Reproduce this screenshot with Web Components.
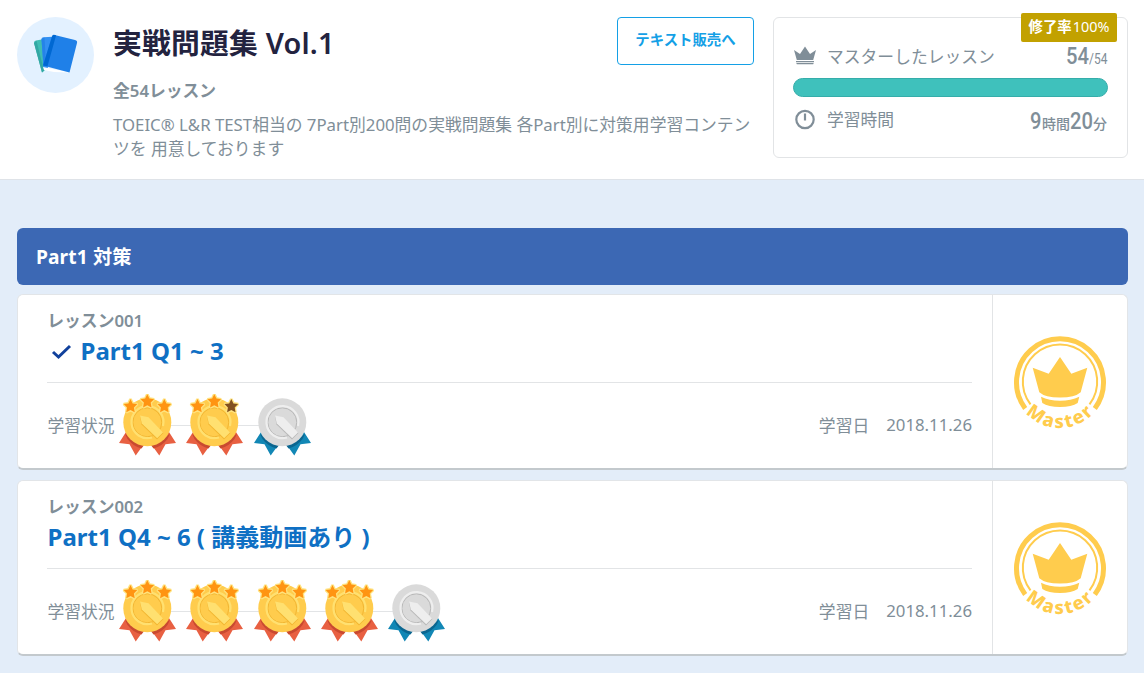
<!DOCTYPE html>
<html lang="ja">
<head>
<meta charset="utf-8">
<title>実戦問題集 Vol.1</title>
<style>
  body {
    margin: 0;
    height: 673px;
    overflow: hidden;
    background: #e3edf9;
    color: #808e98;
    font-family: "Noto Sans", "Noto Sans CJK JP", sans-serif;
    font-size: 16.8px;
    line-height: 24px;
  }
</style>
</head>
<body>
<course-header heading="実戦問題集 Vol.1" count="全54レッスン">
  TOEIC® L&amp;R TEST相当の 7Part別200問の実戦問題集 各Part別に対策用学習コンテンツを 用意しております
  <link-button slot="action">テキスト販売へ</link-button>
  <course-stats slot="stats"></course-stats>
</course-header>
<lesson-section heading="Part1 対策">
  <lesson-card number="レッスン001" medals="3,2,0" date="2018.11.26" checked>Part1 Q1 ~ 3</lesson-card>
  <lesson-card number="レッスン002" medals="3,3,3,3,0" date="2018.11.26">Part1 Q4 ~ 6 ( 講義動画あり )</lesson-card>
</lesson-section>

<script>
class CourseHeader extends HTMLElement {
  constructor() {
    super();
    this.attachShadow({mode: 'open'});
    this.shadowRoot.innerHTML = `
      <style>
        :host {
          display: flex;
          box-sizing: border-box;
          height: 180px;
          padding: 17px 16px 0 17px;
          background: #fff;
          border-bottom: 1px solid #dfe3e8;
        }
        .icon {
          flex: none;
          width: 77px;
          height: 76px;
          margin-right: 19px;
        }
        .info {
          width: 641px;
          margin-right: 19px;
        }
        .top {
          display: flex;
          justify-content: space-between;
          height: 62px;
        }
        h1 {
          margin: 8px 0 0;
          color: #23233f;
          font-size: 28.8px;
          font-weight: 600;
          letter-spacing: .2px;
          line-height: 36px;
        }
        .count {
          font-weight: 600;
        }
        p {
          margin: 10px 0 0;
        }
      </style>
      <svg class="icon" viewBox="0 0 77 76">
        <ellipse cx="38.5" cy="38" rx="38.5" ry="38" fill="#e3f1ff"/>
        <path d="M17 26q0-2 2-2.400l7-1.400 3 30-4 3.300z" fill="#3fbdb3"/>
        <path d="M17 26l2.500-2.300 7.500 30-2 1.800z" fill="#33a7a4"/>
        <path d="M24.500 22q0-1.700 2-1.800l9-.5-5 33-4-1z" fill="#3290f2"/>
        <path d="M24.500 22l3-1.500 1.500 27-2.500 1z" fill="#2583e8"/>
        <path d="M26 50l27 5.500-16-.5-10-2z" fill="#fff"/>
        <path d="M35 19.500q.6-2 2.600-1.600l20.400 5q2.600.6 2 3l-7.500 29.600-26.500-7z" fill="#1f80e8"/>
        <path d="M35 19.500q.6-2 2.600-1.600l1.500.4-8.600 31-4.500-.8z" fill="#0068d2"/>
      </svg>
      <div class="info">
        <div class="top"><h1></h1><slot name="action"></slot></div>
        <div class="count"></div>
        <p><slot></slot></p>
      </div>
      <slot name="stats"></slot>
    `;
  }
  connectedCallback() {
    this.shadowRoot.querySelector('h1').textContent = this.getAttribute('heading');
    this.shadowRoot.querySelector('.count').textContent = this.getAttribute('count');
  }
}

class LinkButton extends HTMLElement {
  constructor() {
    super();
    this.attachShadow({mode: 'open'});
    this.shadowRoot.innerHTML = `
      <style>
        :host {
          display: block;
          box-sizing: border-box;
          width: 137px;
          height: 48px;
          border: 1px solid #14a0e6;
          border-radius: 4px;
          color: #14a0e6;
          font-size: 14.4px;
          font-weight: 700;
          line-height: 44px;
          text-align: center;
        }
      </style>
      <slot></slot>
    `;
  }
}

class CourseStats extends HTMLElement {
  constructor() {
    super();
    this.attachShadow({mode: 'open'});
    this.shadowRoot.innerHTML = `
      <style>
        :host {
          display: block;
          position: relative;
          flex: none;
          box-sizing: border-box;
          width: 355px;
          height: 141px;
          padding: 27px 19px 0;
          border: 1px solid #e2e4e6;
          border-radius: 6px;
        }
        .badge {
          position: absolute;
          top: -5px;
          right: 10px;
          width: 96px;
          height: 29px;
          background: #c2a100;
          border-radius: 2px;
          color: #fff;
          font-size: 14.4px;
          line-height: 28px;
          text-align: center;
          white-space: nowrap;
        }
        .badge b {
          margin-right: 1px;
        }
        .row {
          display: flex;
          align-items: center;
          height: 24px;
        }
        .mark {
          width: 24px;
          height: 24px;
          margin-right: 10px;
        }
        .value {
          display: flex;
          align-items: baseline;
          margin-left: auto;
          padding: 2px 1px 0 0;
          font-family: Roboto, "Noto Sans CJK JP", sans-serif;
          font-size: 14px;
          font-weight: 500;
          line-height: 24px;
          white-space: nowrap;
        }
        /* narrow figures: each box is as wide as its scaled text */
        .num {
          font-size: 24px;
          transform: scaleX(.84);
          transform-origin: 0 0;
        }
        .two {
          width: 23px;
        }
        .one {
          width: 12px;
        }
        .of {
          width: 18px;
          font-size: 14.4px;
          font-weight: 400;
          transform: scaleX(.83);
          transform-origin: 0 0;
        }
        .time {
          padding-top: 4px;
        }
        .bar {
          box-sizing: border-box;
          height: 19px;
          margin: 9px 0 11px;
          background: #3fc1bc;
          border: 1px solid #35adaa;
          border-radius: 10px;
        }
      </style>
      <div class="badge"><b>修了率</b>100%</div>
      <div class="row">
        <svg class="mark" viewBox="0 0 24 24" fill="#808e98">
          <path d="M1 5l6 4 5-7.500 5 7.500 6-4-2.800 10H3.800zM3 16h18v1.300H3zM3.300 18h17.400l-.5 1.300H3.800z"/>
        </svg>
        <span>マスターしたレッスン</span>
        <div class="value"><span class="num two">54</span><span class="of">/54</span></div>
      </div>
      <div class="bar"></div>
      <div class="row">
        <svg class="mark" viewBox="0 0 24 24">
          <circle cx="12" cy="11.500" r="8.700" fill="none" stroke="#808e98" stroke-width="2.200"/>
          <path d="M12 5.500v7" stroke="#808e98" stroke-width="2.200"/>
        </svg>
        <span>学習時間</span>
        <div class="value time"><span class="num one">9</span><span>時間</span><span class="num two">20</span><span>分</span></div>
      </div>
    `;
  }
}

class LessonSection extends HTMLElement {
  constructor() {
    super();
    this.attachShadow({mode: 'open'});
    this.shadowRoot.innerHTML = `
      <style>
        :host {
          display: block;
          padding: 48px 16px 0 17px;
        }
        h2 {
          margin: 0 0 9px;
          padding: 0 19px;
          background: #3c68b4;
          border-radius: 6px;
          color: #fff;
          font-size: 19.2px;
          font-weight: 700;
          letter-spacing: .1px;
          line-height: 57px;
        }
        .list {
          display: grid;
          gap: 10px;
        }
      </style>
      <h2></h2>
      <div class="list"><slot></slot></div>
    `;
  }
  connectedCallback() {
    this.shadowRoot.querySelector('h2').textContent = this.getAttribute('heading');
  }
}

class LessonCard extends HTMLElement {
  constructor() {
    super();
    this.attachShadow({mode: 'open'});
    this.shadowRoot.innerHTML = `
      <style>
        :host {
          display: flex;
          box-sizing: border-box;
          height: 176px;
          background: #fff;
          border: 1px solid #e2e5e8;
          border-bottom: 2px solid #c3c9cd;
          border-radius: 6px;
        }
        .body {
          flex: 1;
          padding: 14px 20px 0 29px;
        }
        .number {
          padding-left: .3px;
          font-weight: 600;
        }
        .name {
          display: flex;
          align-items: center;
          height: 34px;
          padding: 1px 0 14px .6px;
          border-bottom: 1px solid #e2e4e6;
          color: #0f70c4;
          font-size: 24px;
          font-weight: 700;
          line-height: 34px;
        }
        .check {
          display: none;
          width: 27px;
          height: 24px;
          margin-right: 6px;
        }
        :host([checked]) .check {
          display: block;
        }
        .status {
          display: flex;
          align-items: center;
          height: 84px;
          padding-left: .5px;
        }
        .label {
          padding-top: 1px;
        }
        .medals {
          display: flex;
          gap: 10.3px;
          margin: 0 auto 0 4.500px;
          background: linear-gradient(#e2e4e6, #e2e4e6) 20px 31px / calc(100% - 40px) 1px no-repeat;
        }
        .date {
          margin-left: 17px;
        }
        .side {
          display: flex;
          align-items: center;
          justify-content: center;
          width: 134px;
          border-left: 1px solid #e2e4e6;
        }
      </style>
      <div class="body">
        <div class="number"></div>
        <div class="name">
          <svg class="check" viewBox="0 0 27 24"><path d="M5 13l5.500 5 11.500-11" fill="none" stroke="#11419c" stroke-width="3"/></svg>
          <slot></slot>
        </div>
        <div class="status">
          <span class="label">学習状況</span>
          <div class="medals"></div>
          <span class="label">学習日</span>
          <span class="date"></span>
        </div>
      </div>
      <div class="side"><master-seal></master-seal></div>
    `;
  }
  connectedCallback() {
    const root = this.shadowRoot;
    root.querySelector('.number').textContent = this.getAttribute('number');
    root.querySelector('.date').textContent = this.getAttribute('date');
    root.querySelector('.medals').innerHTML = this.getAttribute('medals').split(',')
      .map(stars => `<lesson-medal stars="${stars}"></lesson-medal>`).join('');
  }
}

// stars="0" is a medal that has not been won yet (silver)
class LessonMedal extends HTMLElement {
  constructor() {
    super();
    this.attachShadow({mode: 'open'});
  }
  connectedCallback() {
    const stars = Number(this.getAttribute('stars'));
    const c = stars > 0
      ? {ribbon: '#e86042', fold: '#c94a30', disc: '#ffcc4d', light: '#ffe070', shade: '#f2b632', pen: '#ffe070'}
      : {ribbon: '#1287b5', fold: '#0b6690', disc: '#dadada', light: '#eeeeee', shade: '#b8b8b8', pen: '#eeeeee'};
    const shape = 'M0-6.800L2.100-2.400l4.700.600-3.400 3.400.800 4.900L0 4.200l-4.200 2.300.800-4.900-3.400-3.400 4.700-.600z';
    const places = [[11.5, 11.8], [28.3, 7], [45.3, 11.8]];
    let halo = '';
    let front = '';
    if (stars > 0) {
      places.forEach(([x, y], i) => {
        const at = `transform="translate(${x} ${y})"`;
        halo += `<path d="${shape}" ${at} fill="#ffe27d" stroke="#ffe27d" stroke-width="2.600" stroke-miterlimit="2"/>`;
        front += `<path d="${shape}" ${at} fill="${i < stars ? '#ff9412' : '#82501f'}"/>`;
      });
    }
    this.shadowRoot.innerHTML = `
      <style>
        :host {
          display: block;
          width: 57px;
          height: 62px;
        }
        svg {
          display: block;
        }
      </style>
      <svg width="57" height="62" viewBox="0 0 57 62">
        <path d="M7 38L0 49l10.500 1.200L16.700 61.500 25 50z" fill="${c.ribbon}"/>
        <path d="M50 38l7 11-10.500 1.200L40.300 61.500 32 50z" fill="${c.ribbon}"/>
        <path d="M6 40l2.500 5q5 7 14 9.500l3-4zM51 40l-2.500 5q-5 7-14 9.500l-3-4z" fill="${c.fold}"/>
        <circle cx="28.300" cy="28.300" r="24" fill="${c.disc}"/>
        <circle cx="28.300" cy="28.300" r="14.500" fill="none" stroke="${c.shade}" stroke-width="1"/>
        <path d="M33 43.500A16 16 0 1 1 44 32" fill="none" stroke="${c.light}" stroke-width="2.200"/>
        <path d="M21 22l1.500 8.500L38 45.500l6.500-6.500z" fill="${c.shade}"/>
        <path d="M21 21.500l8.500 1.800L44 38.500l-5.800 5.800L22.800 29.500z" fill="${c.pen}"/>
        ${halo}
        ${front}
      </svg>
    `;
  }
}

class MasterSeal extends HTMLElement {
  constructor() {
    super();
    this.attachShadow({mode: 'open'});
    this.shadowRoot.innerHTML = `
      <style>
        :host {
          display: block;
          width: 92px;
          height: 92px;
        }
        svg {
          display: block;
          overflow: visible;
        }
        text {
          font: 800 18.5px "Noto Sans", sans-serif;
          letter-spacing: 2px;
        }
      </style>
      <svg width="92" height="94" viewBox="0 0 92 94" fill="#ffcc4d">
        <path d="M11.200 72.400A43.500 43.500 0 1 1 80.800 72.400" fill="none" stroke="#ffcc4d" stroke-width="5"/>
        <path d="M16.500 68.300A37.200 37.200 0 1 1 75.500 68.300" fill="none" stroke="#ffcc4d" stroke-width="2"/>
        <path d="M46 21l11.300 16.700 16-6-6.600 24.600Q61 61.500 46 61.500T25.300 56.300L18.700 31.700l16 6z"/>
        <path d="M27 60.700q8 4 19 4t19.300-4l-1.600 6.300q-6 4-17.700 4t-17.700-4z"/>
        <path id="arc" d="M0 46A46 46 0 0 0 92 46" fill="none"/>
        <text text-anchor="middle"><textPath href="#arc" startOffset="50.500%">Master</textPath></text>
      </svg>
    `;
  }
}

customElements.define('course-header', CourseHeader);
customElements.define('link-button', LinkButton);
customElements.define('course-stats', CourseStats);
customElements.define('lesson-section', LessonSection);
customElements.define('lesson-medal', LessonMedal);
customElements.define('master-seal', MasterSeal);
customElements.define('lesson-card', LessonCard);
</script>
</body>
</html>
